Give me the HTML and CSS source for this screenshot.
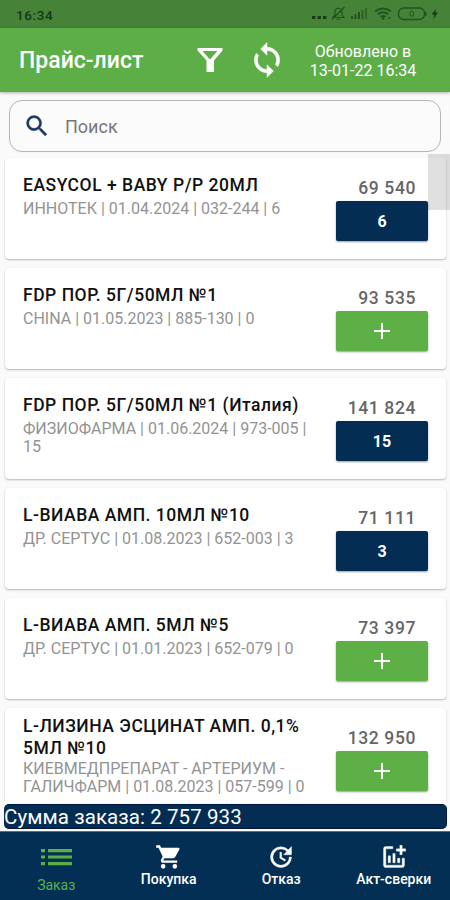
FILE: index.html
```html
<!DOCTYPE html>
<html lang="ru">
<head>
<meta charset="utf-8">
<title>Прайс-лист</title>
<link rel="stylesheet" href="styles.css">
</head>
<body>
<div class="app">
  <div class="status">
    <span class="clock">16:34</span>
    <svg class="status-icons" width="130" height="16" viewBox="0 0 130 16" fill="#24521f">
      <g fill="#183a14"><rect x="2" y="10" width="3.400" height="3"/><rect x="7.500" y="10" width="3.400" height="3"/><rect x="13" y="10" width="3.400" height="3"/></g>
      <g fill="none" stroke="#24521f" stroke-width="1.200"><path d="M22.500 11.500h11.500l-2-2.500V6c0-5-7-5-7 0v3l-2.500 2.500M26.500 13.500h3M22 13.500 34.500 1"/></g>
      <g transform="translate(5 0)"><rect x="36" y="10" width="2" height="3"/><rect x="39.500" y="8" width="2" height="5"/><rect x="43" y="6" width="2" height="7"/><rect x="46.500" y="4" width="2" height="9" opacity=".7"/><rect x="50" y="2" width="2" height="11" opacity=".6"/></g>
      <g transform="translate(6 0)"><g fill="none" stroke="#24521f" stroke-width="2"><path d="M59 5.500q8-6 16 0M61.700 8.300q5.300-4 10.600 0M64.500 10.800q2.500-1.800 5 0"/></g><circle cx="67" cy="12.500" r="1.300"/><rect x="72.500" y="11" width="1.500" height="2"/></g>
      <g transform="translate(5.500 0)"><rect x="83" y="2" width="26" height="11.500" rx="5" fill="none" stroke="#24521f" stroke-width="1.300"/><rect x="94.500" y="5.500" width="3.500" height="4.500" rx="1" fill="none" stroke="#24521f"/><path d="M109.500 6h1.500v4h-1.500z"/></g>
      <path fill="#183a14" d="M126.500 2.500 121.500 8.500h3l-1.500 5 5-7h-3z"/>
    </svg>
  </div>
  <header class="header">
    <h1 class="title">Прайс-лист</h1>
    <svg class="filter" width="26" height="26" viewBox="0 0 26 26"><path fill="#fff" fill-rule="evenodd" d="M.5 1h25v2.500l-8.500 10V25H9.500V13.500L.5 3.500zm5 3 7.500 8.500L20.500 4z"/></svg>
    <svg class="sync" width="38" height="38" viewBox="0 0 24 24"><path fill="#fff" stroke="#fff" stroke-width=".3" d="M12 4V1L8 5l4 4V6c3.310 0 6 2.690 6 6 0 1.010-.25 1.970-.7 2.800l1.460 1.460A7.930 7.930 0 0 0 20 12c0-4.420-3.580-8-8-8zm0 14c-3.310 0-6-2.690-6-6 0-1.010.25-1.970.7-2.800L5.240 7.740A7.930 7.930 0 0 0 4 12c0 4.420 3.580 8 8 8v3l4-4-4-4v3z"/></svg>
    <div class="updated">Обновлено в<br>13-01-22 16:34</div>
  </header>
  <div class="search">
    <svg width="28" height="28" viewBox="0 0 24 24"><path fill="#1b3a61" stroke="#1b3a61" stroke-width=".3" d="M15.500 14h-.79l-.28-.27A6.470 6.470 0 0 0 16 9.500 6.500 6.500 0 1 0 9.500 16c1.610 0 3.090-.59 4.230-1.570l.27.28v.79l5 4.990L20.490 19zm-6 0a4.500 4.500 0 1 1 0-9 4.500 4.500 0 0 1 0 9z"/></svg>
    <span>Поиск</span>
  </div>
  <main class="list">
    <div class="scrollbar"></div>
    <article class="card">
      <div class="info"><h2>EASYCOL + BABY Р/Р 20МЛ</h2><p>ИННОТЕК | 01.04.2024 | 032-244 | 6</p></div>
      <div class="side"><div class="price">69 540</div><div class="btn count">6</div></div>
    </article>
    <article class="card">
      <div class="info"><h2>FDP ПОР. 5Г/50МЛ №1</h2><p>CHINA | 01.05.2023 | 885-130 | 0</p></div>
      <div class="side"><div class="price">93 535</div><div class="btn add"></div></div>
    </article>
    <article class="card">
      <div class="info"><h2>FDP ПОР. 5Г/50МЛ №1 (Италия)</h2><p>ФИЗИОФАРМА | 01.06.2024 | 973-005 |<br>15</p></div>
      <div class="side"><div class="price">141 824</div><div class="btn count">15</div></div>
    </article>
    <article class="card">
      <div class="info"><h2>L-ВИАВА АМП. 10МЛ №10</h2><p>ДР. СЕРТУС | 01.08.2023 | 652-003 | 3</p></div>
      <div class="side"><div class="price">71 111</div><div class="btn count">3</div></div>
    </article>
    <article class="card">
      <div class="info"><h2>L-ВИАВА АМП. 5МЛ №5</h2><p>ДР. СЕРТУС | 01.01.2023 | 652-079 | 0</p></div>
      <div class="side"><div class="price">73 397</div><div class="btn add"></div></div>
    </article>
    <article class="card tall">
      <div class="info"><h2>L-ЛИЗИНА ЭСЦИНАТ АМП. 0,1%<br>5МЛ №10</h2><p>КИЕВМЕДПРЕПАРАТ - АРТЕРИУМ -<br>ГАЛИЧФАРМ | 01.08.2023 | 057-599 | 0</p></div>
      <div class="side"><div class="price">132 950</div><div class="btn add"></div></div>
    </article>
  </main>
  <div class="total-wrap"><div class="total">Сумма заказа: 2 757 933</div></div>
  <nav class="nav">
    <div class="tab active">
      <svg width="32" height="20" viewBox="0 0 32 20" fill="#5cb046"><path d="M1 2h4v3.200H1zM8 2h24v3.200H8zM1 8.400h4v3.200H1zM8 8.400h24v3.200H8zM1 15h4v3.200H1zM8 15h24v3.200H8z"/></svg>
      <span>Заказ</span>
    </div>
    <div class="tab">
      <svg width="28" height="28" viewBox="0 0 24 24" fill="#fff"><path d="M7 18a2 2 0 1 0 0 4 2 2 0 0 0 0-4zM1 2v2h2l3.600 7.590-1.350 2.450C4.520 15.370 5.480 17 7 17h12v-2H7.420a.25.25 0 0 1-.22-.37l.9-1.630h7.450c.75 0 1.410-.41 1.750-1.030l3.580-6.490A1 1 0 0 0 20 4H5.210l-.94-2H1zm16 16a2 2 0 1 0 0 4 2 2 0 0 0 0-4z"/></svg>
      <span>Покупка</span>
    </div>
    <div class="tab">
      <svg width="28" height="28" viewBox="0 0 24 24" fill="#fff" stroke="#fff" stroke-width=".3"><path d="M21 10.120h-6.780l2.740-2.820c-2.730-2.700-7.150-2.800-9.880-.1a6.880 6.880 0 0 0 0 9.790 7.020 7.020 0 0 0 9.880 0C18.320 15.650 19 14.080 19 12.100h2c0 1.980-.88 4.550-2.640 6.290-3.510 3.480-9.210 3.480-12.720 0-3.500-3.470-3.530-9.110-.02-12.580a8.990 8.990 0 0 1 12.650 0L21 3v7.120zM12.500 8v4.250l3.500 2.080-.72 1.210L11 13V8h1.500z"/></svg>
      <span>Отказ</span>
    </div>
    <div class="tab">
      <svg width="28" height="28" viewBox="0 0 24 24" fill="#fff" stroke="#fff" stroke-width=".3"><path d="M22 5v2h-3v3h-2V7h-3V5h3V2h2v3h3zm-3 14H5V5h6V3H5a2 2 0 0 0-2 2v14c0 1.100.9 2 2 2h14a2 2 0 0 0 2-2v-6h-2v6zm-4-6v4h2v-4h-2zm-4 4h2V9h-2v8zm-2 0v-6H7v6h2z"/></svg>
      <span>Акт-сверки</span>
    </div>
  </nav>
</div>
</body>
</html>
```
FILE: styles.css
```css
* { box-sizing: border-box; }
body { margin: 0; font-family: Roboto, "Liberation Sans", sans-serif; }
h1, h2, p { margin: 0; }
.app { width: 450px; height: 900px; display: flex; flex-direction: column; overflow: hidden; background: #fafafa; }
.status { flex: none; height: 28px; background: #468339; display: flex; justify-content: space-between; align-items: center; padding: 0 10px 0 16px; }
.clock { font-size: 13.500px; font-weight: 500; letter-spacing: .6px; color: #163712; line-height: 28px; padding-top: 2px; }
.header { flex: none; height: 64px; background: #5dae47; color: #fff; display: flex; align-items: center; padding-left: 19px; box-shadow: 0 1px 3px rgba(0,0,0,.3); }
.title { width: 178px; font-size: 23px; font-weight: 500; line-height: 30px; padding-top: 2px; white-space: nowrap; }
.sync { margin-left: 25px; }
.updated { width: 140px; margin-left: 7px; font-size: 16px; line-height: 19px; padding-top: 1px; text-align: center; white-space: nowrap; }
.search { flex: none; height: 52px; margin: 8px 9px 0 9px; border: 1.5px solid #b5b5b5; border-radius: 13px; background: #fbfbfb; display: flex; align-items: center; padding-left: 13px; }
.search span { margin-left: 14px; font-size: 18px; color: #777; }
.list { position: relative; flex: none; height: 650px; padding: 6px 4px 0 5px; overflow: hidden; display: flex; flex-direction: column; gap: 9px; }
.scrollbar { position: absolute; right: 0; top: 2px; width: 22px; height: 56px; background: rgba(0,0,0,.12); }
.card { flex: none; height: 101px; background: #fff; border-radius: 4px; box-shadow: 0 1px 2px rgba(0,0,0,.28); display: flex; justify-content: space-between; padding: 16px 18px 0; }
.info { white-space: nowrap; }
.info h2 { font-size: 17.500px; font-weight: 500; line-height: 22px; letter-spacing: .52px; color: #111; }
.info p { font-size: 16px; line-height: 18px; color: #939393; font-weight: 400; padding-top: 4px; }
.tall .info { margin-top: -9px; }
.tall .info p { padding-top: 1px; }
.side { flex: none; width: 92px; padding-top: 4px; }
.price { font-size: 17.500px; line-height: 20px; font-weight: 500; letter-spacing: .6px; color: #666; text-align: right; padding-right: 12px; margin-bottom: 3px; white-space: nowrap; }
.btn { height: 40px; border-radius: 2px; color: #fff; font-size: 16px; font-weight: 700; display: flex; align-items: center; justify-content: center; box-shadow: 0 1px 2px rgba(0,0,0,.4); }
.count { background: #042d53; }
.add { background: linear-gradient(#fff, #fff) center / 16px 2px no-repeat, linear-gradient(#fff, #fff) center / 2px 16px no-repeat, #5cb046; }
.total-wrap { flex: none; height: 29px; padding: 2px 3px 2px 4px; }
.total { height: 25px; background: #042d53; border: 1px solid #021742; border-left: 0; border-radius: 5px; color: #fff; font-size: 20.500px; letter-spacing: .08px; line-height: 24px; white-space: nowrap; }
.nav { flex: none; height: 69px; background: #042f55; border-top: 1px solid #5a6c84; display: grid; grid-template-columns: repeat(4, 1fr); padding-top: 11px; }
.tab { display: flex; flex-direction: column; align-items: center; color: #fff; font-size: 14px; font-weight: 500; line-height: 16px; white-space: nowrap; }
.active { color: #5cb046; font-weight: 400; padding-top: 4px; }
.active span { padding-top: 10px; }
```
